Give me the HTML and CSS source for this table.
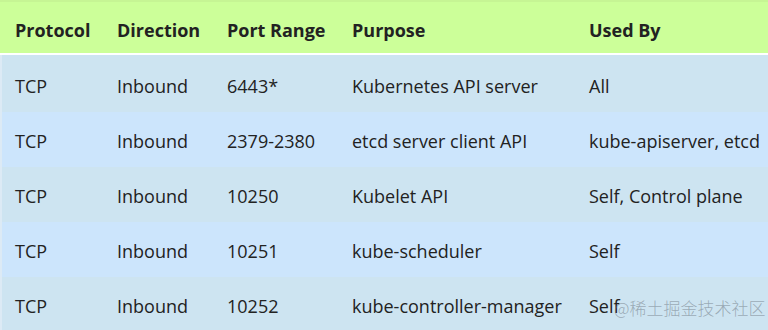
FILE: index.html
```html
<!DOCTYPE html>
<html lang="en">
<head>
<meta charset="utf-8">
<link rel="stylesheet" href="styles.css">
</head>
<body>
<div class="page">
  <table class="ports">
    <thead>
      <tr>
        <th class="c1">Protocol</th>
        <th class="c2">Direction</th>
        <th class="c3">Port Range</th>
        <th class="c4">Purpose</th>
        <th class="c5">Used By</th>
      </tr>
    </thead>
    <tbody>
      <tr class="odd first">
        <td>TCP</td><td>Inbound</td><td>6443*</td><td>Kubernetes API server</td><td>All</td>
      </tr>
      <tr class="even">
        <td>TCP</td><td>Inbound</td><td>2379-2380</td><td>etcd server client API</td><td>kube-apiserver, etcd</td>
      </tr>
      <tr class="odd">
        <td>TCP</td><td>Inbound</td><td>10250</td><td>Kubelet API</td><td>Self, Control plane</td>
      </tr>
      <tr class="even">
        <td>TCP</td><td>Inbound</td><td>10251</td><td>kube-scheduler</td><td>Self</td>
      </tr>
      <tr class="odd">
        <td>TCP</td><td>Inbound</td><td>10252</td><td>kube-controller-manager</td><td>Self</td>
      </tr>
    </tbody>
  </table>
  <div class="watermark">@稀土掘金技术社区</div>
</div>
</body>
</html>
```
FILE: styles.css
```css
html, body {
  margin: 0;
  padding: 0;
  background: #ffffff;
}
body {
  font-family: "Open Sans", "Noto Sans CJK SC", sans-serif;
  color: #222222;
  width: 768px;
  height: 330px;
  overflow: hidden;
}
.page {
  position: relative;
  width: 768px;
  height: 330px;
  overflow: hidden;
}
.ports {
  width: 768px;
  border-collapse: collapse;
  table-layout: fixed;
  font-size: 18px;
}
.ports th, .ports td {
  text-align: left;
  padding: 0 0 0 15px;
  white-space: nowrap;
  vertical-align: middle;
}
.c1 { width: 87px; }
.c2 { width: 95px; }
.c3 { width: 110px; }
.c4 { width: 222px; }
.c5 { width: auto; }
.ports thead tr {
  background: #ccff99;
  height: 53px;
  border-top: 2px solid #c6f594;
  border-bottom: 2px solid #ffffff;
}
.ports th {
  font-weight: 700;
  padding-top: 5px;
}
.ports tbody tr {
  height: 55px;
}
.ports tbody tr.first {
  height: 58px;
}
.ports tbody tr.first td {
  padding-top: 4px;
}
.ports tbody td {
  padding-top: 2px;
}
.ports tbody td:first-child {
  box-shadow: inset 2px 0 0 #dceaf5;
}
.ports tr.odd {
  background: #cde4f1;
}
.ports tr.even {
  background: #cce5fc;
}
.watermark {
  position: absolute;
  left: 614px;
  top: 299px;
  font-size: 17px;
  line-height: 18px;
  white-space: nowrap;
  color: rgba(110, 120, 130, 0.55);
  font-family: "Noto Sans CJK SC", sans-serif;
  font-weight: 300;
}
```
